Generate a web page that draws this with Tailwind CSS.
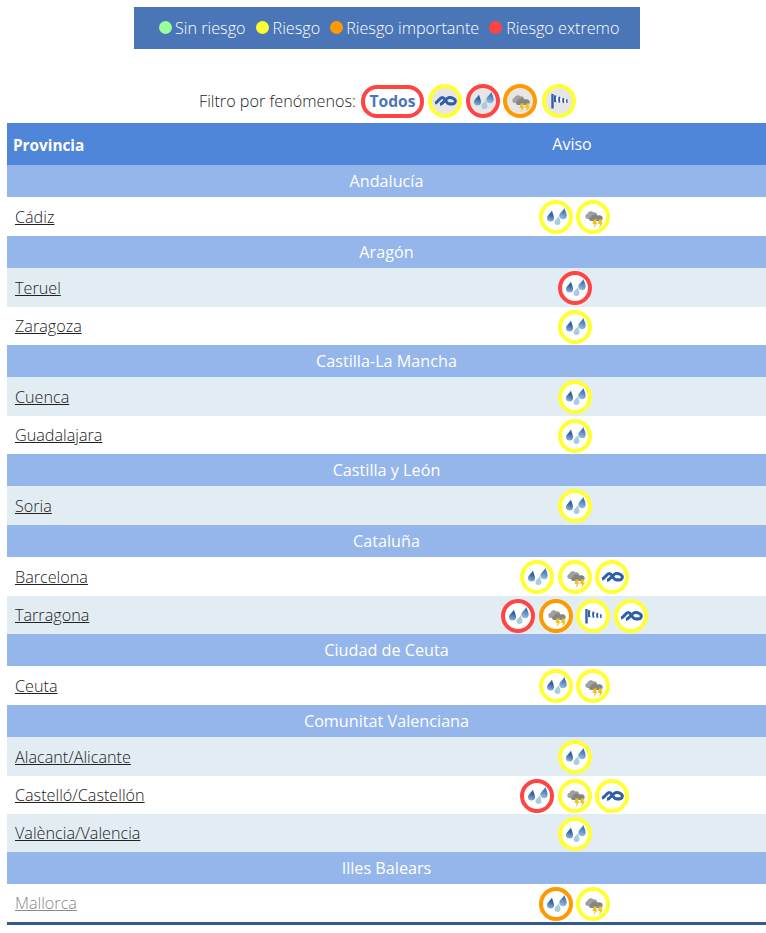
<!DOCTYPE html>
<html lang="es">
<head>
    <meta charset="UTF-8">
    <title>Avisos</title>
    <script src="https://cdn.jsdelivr.net/npm/@tailwindcss/browser@4"></script>
</head>
<body class="bg-white font-['Open_Sans',sans-serif] font-light text-[16.2px] text-[#222] overflow-hidden">

    <!-- iconos -->
    <svg class="absolute w-0 h-0">
        <defs>
            <linearGradient id="gota1" x1="0.6" y1="0" x2="0.4" y2="1">
                <stop offset="0.35" stop-color="#2f62a3"/>
                <stop offset="1" stop-color="#8fb2d4"/>
            </linearGradient>
            <linearGradient id="gota2" x1="0.6" y1="0" x2="0.4" y2="1">
                <stop offset="0.25" stop-color="#3f78b6"/>
                <stop offset="1" stop-color="#9cc0dc"/>
            </linearGradient>
        </defs>
        <symbol id="lluvia" viewBox="0 0 26 26">
            <path d="M9 6.5 C9.5 9 11 11.5 11 14 A3.5 3.5 0 0 1 4 14 C4 11.5 7.5 9.5 9 6.5Z" fill="url(#gota1)"/>
            <path d="M15.8 12 C16 14 17.5 16 17.5 18 A3 3 0 0 1 11.5 18 C11.5 16 14.5 14.5 15.8 12Z" fill="#aaccdf"/>
            <path d="M21.5 4 C22 6.5 23.7 9 23.7 11.5 A3.7 3.7 0 0 1 16.3 11.5 C16.3 9 20 7 21.5 4Z" fill="url(#gota2)"/>
        </symbol>
        <symbol id="tormenta" viewBox="0 0 26 26">
            <path d="M8 15 C4.5 15 4.5 10.5 7.5 10 C8 7 12 6.5 13.5 8.5 C15.5 8 17 9 17 11 L15 15Z" fill="#a0a0a0"/>
            <path d="M11 17 C8.5 17 8.5 13.3 11 13 C11.5 10 16 9.5 17.5 11.5 C20.5 10.5 23.5 12.5 22.5 15 C22.3 16.3 21.5 17 20 17Z" fill="#858585"/>
            <path d="M13.5 15.5 H17 L15.8 18.5 H17.5 L13.8 24 L14.6 20 H12.6Z" fill="#f2c11d"/>
            <path d="M19 15.5 H22.5 L21.3 18.5 H23 L19.3 24 L20.1 20 H18.1Z" fill="#f2c11d"/>
        </symbol>
        <symbol id="viento" viewBox="0 0 26 26">
            <path d="M5.3 6 H7.7 V20.5 H5.3Z" fill="#2f5fa8"/>
            <path d="M7.7 7 L21 11 C22.5 12 22.5 14.5 21 15 L7.7 14Z" fill="#ffffff"/>
            <path d="M7.7 7 L10.5 7.8 C9.8 9.5 9.8 12 10.5 14.2 L7.7 14Z" fill="#2f5fa8"/>
            <path d="M13.6 8.8 C12.8 10.5 12.8 12.7 13.6 14.6" stroke="#2f5fa8" stroke-width="2" fill="none"/>
            <path d="M17.6 10 C16.8 11.5 16.8 13.4 17.6 14.9" stroke="#2f5fa8" stroke-width="2" fill="none"/>
            <path d="M21.2 11.3 C20.5 12.3 20.5 13.8 21.2 14.9" stroke="#2f5fa8" stroke-width="1.6" fill="none"/>
        </symbol>
        <symbol id="costeros" viewBox="0 0 26 26">
            <path d="M3 15 C6 14.5 7.5 9.5 10.5 9.5 C13 9.5 13.5 14 16 15.4 C17.5 16.1 19 15.9 20 15.4" stroke="#2f5fa8" stroke-width="3" fill="none"/>
            <path d="M8 16.5 C11.5 16 13.5 10.2 17 9.6 C20 9.3 23.8 11 23.3 13.5 C23 15.2 21 16.1 19 15.9" stroke="#2f5fa8" stroke-width="3" fill="none"/>
        </symbol>
    </svg>

    <!-- leyenda -->
    <div class="mt-[7px] ml-[134px] pl-[25px] w-[506px] h-[42px] bg-[#4a76b8] flex items-center gap-[10px] text-white">
        <span class="flex items-center gap-[3px]"><i class="w-[13px] h-[13px] rounded-full bg-[#99ff99]"></i>Sin riesgo</span>
        <span class="flex items-center gap-[4px]"><i class="w-[13px] h-[13px] rounded-full bg-[#ffff33]"></i>Riesgo</span>
        <span class="flex items-center gap-[3px]"><i class="w-[13px] h-[13px] rounded-full bg-[#ff9900]"></i>Riesgo importante</span>
        <span class="flex items-center gap-[4px]"><i class="w-[13px] h-[13px] rounded-full bg-[#ff4444]"></i>Riesgo extremo</span>
    </div>

    <!-- filtro -->
    <div class="mt-[35px] pl-[199px] h-[34px] flex items-center">
        <span class="w-[162px]">Filtro por fenómenos:</span>
        <span class="w-[63px] h-[33px] pt-[2px] mr-[4px] flex items-center justify-center rounded-[16px] border-[4px] border-[#ff4444] text-[#4a76b8] text-[15.6px] font-bold">Todos</span>
        <span class="w-[34px] h-[34px] mr-[4px] rounded-full border-[4px] border-[#ffff33] bg-[#e6e6e6] flex items-center justify-center"><svg class="w-[26px] h-[26px]"><use href="#costeros"/></svg></span>
        <span class="w-[34px] h-[34px] mr-[3px] rounded-full border-[4px] border-[#ff4444] bg-[#e6e6e6] flex items-center justify-center"><svg class="w-[26px] h-[26px]"><use href="#lluvia"/></svg></span>
        <span class="w-[34px] h-[34px] mr-[5px] rounded-full border-[4px] border-[#ff9900] bg-[#e6e6e6] flex items-center justify-center"><svg class="w-[26px] h-[26px]"><use href="#tormenta"/></svg></span>
        <span class="w-[34px] h-[34px] rounded-full border-[4px] border-[#ffff33] bg-[#e6e6e6] flex items-center justify-center"><svg class="w-[26px] h-[26px]"><use href="#viento"/></svg></span>
    </div>

    <!-- tabla -->
    <div class="mt-[5px] ml-[7px]">
        <div class="h-[42px] bg-[#4f86d9] text-white flex items-center">
            <div class="w-[376px] pl-[6px] pt-[2px] text-[15.3px] font-bold">Provincia</div>
            <div class="w-[378px] text-center font-normal text-[16px]">Aviso</div>
        </div>
        <div id="filas" class="border-b-[3px] border-[#335a94]"></div>
    </div>

    <script>
        // colores del borde por nivel
        const nivel = {
            y: 'border-[#ffff33]',
            o: 'border-[#ff9900]',
            r: 'border-[#ff4444]'
        };

        // filas de 38px, el resto son de 39px
        const bajas = ['Zaragoza', 'Guadalajara', 'Tarragona', 'Castelló/Castellón', 'València/Valencia', 'Mallorca'];

        const datos = [
            ['Andalucía'],
            ['Cádiz', 'white', [['lluvia', 'y'], ['tormenta', 'y']]],
            ['Aragón'],
            ['Teruel', 'blue', [['lluvia', 'r']]],
            ['Zaragoza', 'white', [['lluvia', 'y']]],
            ['Castilla-La Mancha'],
            ['Cuenca', 'blue', [['lluvia', 'y']]],
            ['Guadalajara', 'white', [['lluvia', 'y']]],
            ['Castilla y León'],
            ['Soria', 'blue', [['lluvia', 'y']]],
            ['Cataluña'],
            ['Barcelona', 'white', [['lluvia', 'y'], ['tormenta', 'y'], ['costeros', 'y']]],
            ['Tarragona', 'blue', [['lluvia', 'r'], ['tormenta', 'o'], ['viento', 'y'], ['costeros', 'y']]],
            ['Ciudad de Ceuta'],
            ['Ceuta', 'white', [['lluvia', 'y'], ['tormenta', 'y']]],
            ['Comunitat Valenciana'],
            ['Alacant/Alicante', 'blue', [['lluvia', 'y']]],
            ['Castelló/Castellón', 'white', [['lluvia', 'r'], ['tormenta', 'y'], ['costeros', 'y']]],
            ['València/Valencia', 'blue', [['lluvia', 'y']]],
            ['Illes Balears'],
            ['Mallorca', 'white', [['lluvia', 'o'], ['tormenta', 'y']], true]
        ];

        let html = '';
        datos.forEach(([nombre, fondo, avisos, visitado]) => {
            if (!avisos) {
                html += `<div class="h-[32px] bg-[#95b6ea] text-white text-center font-normal flex items-center justify-center">${nombre}</div>`;
                return;
            }
            const iconos = avisos.map(([icono, n]) =>
                `<span class="w-[34px] h-[34px] mx-[1.75px] rounded-full border-[4px] ${nivel[n]} bg-white flex items-center justify-center"><svg class="w-[26px] h-[26px]"><use href="#${icono}"/></svg></span>`
            ).join('');
            html += `<div class="${bajas.includes(nombre) ? 'h-[38px]' : 'h-[39px]'} pt-[1px] flex items-center ${fondo === 'blue' ? 'bg-[#e2edf3]' : 'bg-white'}">
                <div class="w-[376px] pl-[8px]"><a href="#" class="underline ${visitado ? 'text-[#888]' : 'text-[#222]'}">${nombre}</a></div>
                <div class="w-[383px] flex justify-center">${iconos}</div>
            </div>`;
        });
        document.getElementById('filas').innerHTML = html;
    </script>
</body>
</html>
